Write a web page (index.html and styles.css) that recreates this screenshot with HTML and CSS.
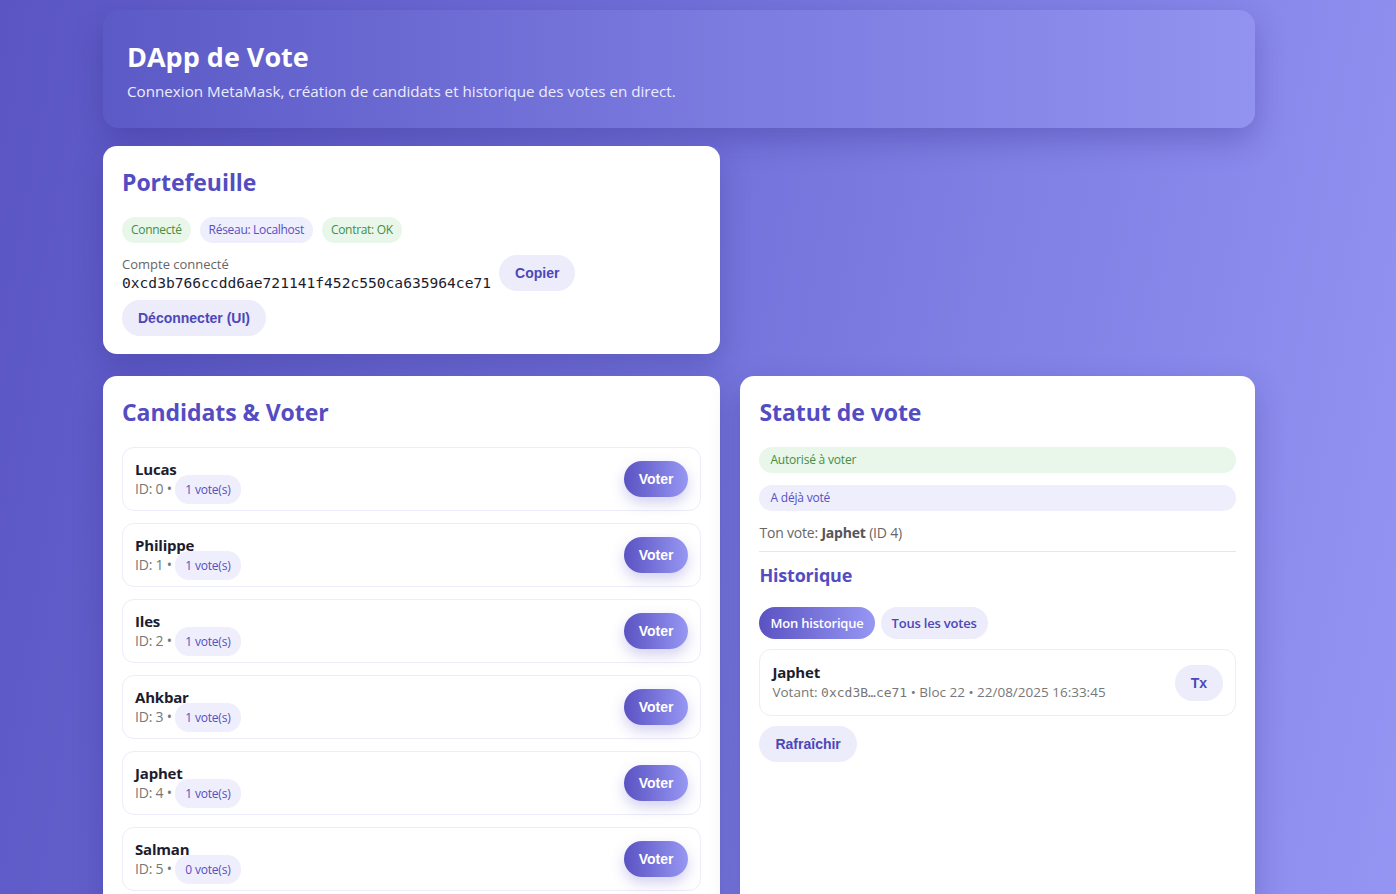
FILE: index.html
```html
<!DOCTYPE html>
<html lang="fr">
<head>
<meta charset="utf-8">
<title>DApp de Vote</title>
<link rel="stylesheet" href="styles.css">
</head>
<body>
<div class="app">
  <header class="hero">
    <h1>DApp de Vote</h1>
    <p>Connexion MetaMask, création de candidats et historique des votes en direct.</p>
  </header>

  <div class="grid">
    <section class="card wallet">
      <h2>Portefeuille</h2>
      <div class="pills">
        <span class="pill green">Connecté</span>
        <span class="pill blue">Réseau: Localhost</span>
        <span class="pill green">Contrat: OK</span>
      </div>
      <div class="account-row">
        <div class="account">
          <div class="label">Compte connecté</div>
          <div class="addr">0xcd3b766ccdd6ae721141f452c550ca635964ce71</div>
        </div>
        <button class="btn soft">Copier</button>
      </div>
      <button class="btn soft">Déconnecter (UI)</button>
    </section>
    <div></div>

    <section class="card">
      <h2>Candidats &amp; Voter</h2>
      <div class="list">
        <div class="item">
          <div class="info"><div class="name">Lucas</div><div class="meta">ID: 0 • <span class="count">1 vote(s)</span></div></div>
          <button class="btn grad">Voter</button>
        </div>
        <div class="item">
          <div class="info"><div class="name">Philippe</div><div class="meta">ID: 1 • <span class="count">1 vote(s)</span></div></div>
          <button class="btn grad">Voter</button>
        </div>
        <div class="item">
          <div class="info"><div class="name">Iles</div><div class="meta">ID: 2 • <span class="count">1 vote(s)</span></div></div>
          <button class="btn grad">Voter</button>
        </div>
        <div class="item">
          <div class="info"><div class="name">Ahkbar</div><div class="meta">ID: 3 • <span class="count">1 vote(s)</span></div></div>
          <button class="btn grad">Voter</button>
        </div>
        <div class="item">
          <div class="info"><div class="name">Japhet</div><div class="meta">ID: 4 • <span class="count">1 vote(s)</span></div></div>
          <button class="btn grad">Voter</button>
        </div>
        <div class="item">
          <div class="info"><div class="name">Salman</div><div class="meta">ID: 5 • <span class="count">0 vote(s)</span></div></div>
          <button class="btn grad">Voter</button>
        </div>
      </div>
    </section>

    <section class="card">
      <h2>Statut de vote</h2>
      <div class="status green">Autorisé à voter</div>
      <div class="status blue">A déjà voté</div>
      <div class="myvote">Ton vote: <strong>Japhet</strong> (ID 4)</div>
      <hr class="sep">
      <h3>Historique</h3>
      <div class="tabs">
        <button class="tab active">Mon historique</button>
        <button class="tab">Tous les votes</button>
      </div>
      <div class="item hist">
        <div class="info"><div class="name">Japhet</div><div class="meta">Votant: <span class="mono">0xcd3B…ce71</span> • Bloc 22 • 22/08/2025 16:33:45</div></div>
        <button class="btn soft">Tx</button>
      </div>
      <button class="btn soft">Rafraîchir</button>
    </section>
  </div>
</div>
</body>
</html>
```

FILE: styles.css
```css
* { box-sizing: border-box; }

body {
  margin: 0;
  min-height: 100vh;
  font-family: "Open Sans", "Noto Sans", sans-serif;
  color: #1c1c2e;
  background: linear-gradient(100deg, #5a55c3 0%, #7474dc 50%, #9595f4 100%);
}

.app {
  width: 1152px;
  margin-left: 103px;
  padding: 10px 0 40px;
}

.hero {
  height: 118px;
  padding: 29px 24px 0;
  border-radius: 16px;
  color: #fff;
  background: linear-gradient(90deg, #5c5ac6 0%, #7b7be0 55%, #9292f0 100%);
  box-shadow: 0 12px 30px rgba(40, 30, 120, 0.28);
}

.hero h1 {
  margin: 0;
  font-size: 27px;
  line-height: 36px;
  font-weight: 700;
}

.hero p {
  margin: 6px 0 0;
  font-size: 15.2px;
  line-height: 20px;
  color: #ececff;
}

.grid {
  display: grid;
  grid-template-columns: 1.2fr 1fr;
  column-gap: 20px;
  row-gap: 22px;
  margin-top: 18px;
}

.card {
  background: #fff;
  border-radius: 14px;
  padding: 20px 19px 18px;
  box-shadow: 0 12px 30px rgba(40, 30, 120, 0.25);
}

.card h2 {
  margin: 0 0 19px;
  font-size: 23px;
  line-height: 32px;
  font-weight: 700;
  letter-spacing: -0.05px;
  color: #534cc2;
}

.pills {
  display: flex;
  gap: 9px;
}

.pill {
  display: inline-block;
  height: 26px;
  line-height: 26px;
  padding: 0 9px;
  border-radius: 13px;
  font-size: 12px;
  letter-spacing: -0.3px;
}

.green { background: #e9f6ea; color: #3f8f45; }
.blue { background: #eeeefc; color: #5650c2; }

.account-row {
  display: flex;
  align-items: flex-start;
  gap: 8px;
  margin-top: 12px;
}

.label {
  font-size: 13px;
  line-height: 18px;
  color: #666;
}

.addr {
  font-family: "DejaVu Sans Mono", monospace;
  font-size: 14.6px;
  line-height: 20px;
  color: #1c1c2e;
}

.wallet > .btn { margin-top: 7px; }

.btn {
  display: inline-block;
  height: 36px;
  padding: 0 16px;
  border: 0;
  border-radius: 18px;
  font-family: "Liberation Sans", Arial, sans-serif;
  font-size: 14px;
  font-weight: 700;
  cursor: pointer;
}

.btn.soft { background: #ececfb; color: #4d47b8; }

.btn.grad {
  padding: 0 15px;
  color: #fff;
  background: linear-gradient(90deg, #5a52c2 0%, #9797f3 100%);
  box-shadow: 0 6px 14px rgba(80, 70, 190, 0.25);
}

.list {
  display: flex;
  flex-direction: column;
  gap: 12px;
}

.item {
  display: flex;
  align-items: center;
  justify-content: space-between;
  padding: 11px 12px;
  border: 1px solid #ececfa;
  border-radius: 12px;
}

.name {
  font-size: 15px;
  line-height: 20px;
  font-weight: 700;
  letter-spacing: -0.2px;
  color: #1c1c2e;
}

.meta {
  font-size: 14px;
  line-height: 20px;
  letter-spacing: -0.2px;
  color: #777;
}

.count {
  padding: 6px 10px;
  border-radius: 14px;
  background: #eeeefc;
  color: #5650c2;
  font-size: 12px;
  line-height: 16px;
}

.status {
  height: 26px;
  line-height: 26px;
  padding: 0 11px;
  border-radius: 13px;
  font-size: 12px;
  letter-spacing: -0.2px;
  margin-bottom: 12px;
}

.myvote {
  font-size: 14px;
  line-height: 20px;
  letter-spacing: -0.2px;
  color: #666;
  margin-top: 10px;
}

.myvote strong { color: #555; }

.sep {
  margin: 8px 0 10px;
  border: 0;
  border-top: 1px solid #e6e6f2;
}

.card h3 {
  margin: 0 0 19px;
  font-size: 18px;
  line-height: 26px;
  font-weight: 700;
  letter-spacing: -0.2px;
  color: #534cc2;
}

.tabs {
  display: flex;
  gap: 6px;
  margin-bottom: 10px;
}

.tab {
  height: 32px;
  padding: 0 11px;
  border: 0;
  border-radius: 16px;
  font-family: "Open Sans", "Noto Sans", sans-serif;
  font-size: 13px;
  font-weight: 600;
  letter-spacing: -0.2px;
  background: #ececfb;
  color: #4d47b8;
}

.tab.active {
  color: #fff;
  background: linear-gradient(90deg, #5a52c2 0%, #9797f3 100%);
}

.hist {
  padding: 12px;
  margin-bottom: 10px;
}

.hist .meta {
  font-size: 13.5px;
  letter-spacing: 0;
}

.mono {
  font-family: "DejaVu Sans Mono", monospace;
  font-size: 13px;
}
```
